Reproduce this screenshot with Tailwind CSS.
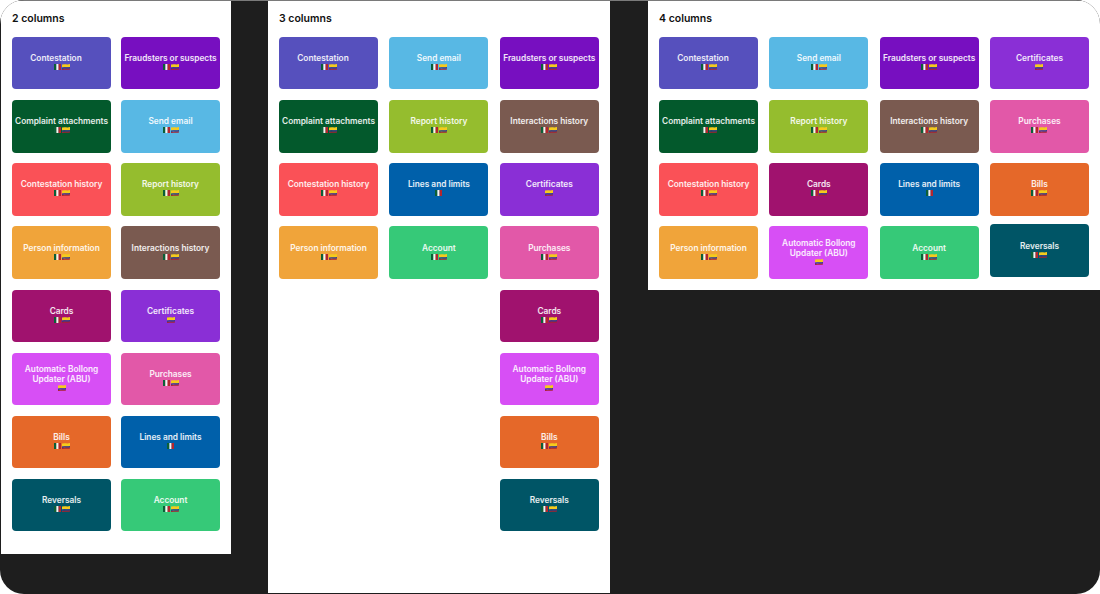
<!DOCTYPE html>
<html>

<head>
    <meta charset="UTF-8">
    <title>Columns</title>
    <script src="https://cdn.jsdelivr.net/npm/@tailwindcss/browser@4"></script>
</head>

<body class="bg-white">
    <div class="h-[594px] w-[1100px] overflow-hidden rounded-[24px] bg-[#1e1e1e] font-['Inter',sans-serif]">
        <!-- Top edge of the frame -->
        <div class="h-px bg-[#7a7a7a]"></div>

        <div class="flex items-start">

            <!-- 2 columns -->
            <div class="ml-px h-[553px] w-[230px] bg-white pl-[11px] pt-[10px]">
                <h2 class="mb-[11px] text-[10.5px] leading-[15px] font-semibold text-[#111]">2 columns</h2>
                <div id="two" class="flex gap-[10px]"></div>
            </div>

            <!-- 3 columns -->
            <div class="ml-[37px] h-[592px] w-[342px] bg-white pl-[11px] pt-[10px]">
                <h2 class="mb-[11px] text-[10.5px] leading-[15px] font-semibold text-[#111]">3 columns</h2>
                <div id="three" class="flex gap-[11.4px]"></div>
            </div>

            <!-- 4 columns -->
            <div class="ml-[38px] h-[289px] w-[452px] bg-white pl-[11px] pt-[10px]">
                <h2 class="mb-[11px] text-[10.5px] leading-[15px] font-semibold text-[#111]">4 columns</h2>
                <div id="four" class="flex gap-[11.33px]"></div>
            </div>
        </div>
    </div>

    <script>
        const cards = {
            contestation: ['Contestation', 'bg-[#5650bd]', 'both'],
            email: ['Send email', 'bg-[#58b8e4]', 'both'],
            fraud: ['Fraudsters or suspects', 'bg-[#770fc0]', 'both'],
            certificates: ['Certificates', 'bg-[#8a2fd6]', 'co'],
            complaint: ['Complaint attachments', 'bg-[#03592c]', 'both'],
            report: ['Report history', 'bg-[#95bd2e]', 'both'],
            interactions: ['Interactions history', 'bg-[#7a5a50]', 'both'],
            purchases: ['Purchases', 'bg-[#e258a8]', 'both'],
            history: ['Contestation history', 'bg-[#fa5157]', 'both'],
            cards: ['Cards', 'bg-[#a0126e]', 'both'],
            lines: ['Lines and limits', 'bg-[#0060aa]', 'mx'],
            bills: ['Bills', 'bg-[#e56829]', 'both'],
            person: ['Person information', 'bg-[#f0a43a]', 'both'],
            abu: ['Automatic Bollong<br>Updater (ABU)', 'bg-[#d74ff5]', 'co'],
            account: ['Account', 'bg-[#36c978]', 'both'],
            reversals: ['Reversals', 'bg-[#005566]', 'both']
        };

        // Small flags, the second one waves a little
        const mx = '<svg width="7" height="6" viewBox="0 0 7 6"><rect width="2.4" height="6" fill="#0b5f36"/><rect x="2.4" width="2.2" height="6" fill="#f4f4f0"/><rect x="4.6" width="2.4" height="6" fill="#b3262e"/></svg>';
        const co = '<svg width="8" height="6" viewBox="0 0 8 6"><path d="M0 .6Q2 0 4 .3T8 0V3Q6 3.5 4 3.2T0 3.5Z" fill="#f5cb1c"/><path d="M0 3.5Q2 3 4 3.2T8 3V4.5Q6 5 4 4.7T0 5Z" fill="#2b3f8f"/><path d="M0 5Q2 4.5 4 4.7T8 4.5V5.6Q6 6 4 5.8T0 6Z" fill="#a8222e"/></svg>';

        function renderColumns(id, columns) {
            const root = document.getElementById(id);
            columns.forEach(column => {
                const col = document.createElement('div');
                col.className = 'flex w-[99px] flex-col gap-[10.75px]';
                column.forEach(key => {
                    const [label, color, flags] = cards[key];
                    const shift = key === 'reversals' && id === 'four' ? ' -mt-[2px]' : '';
                    // The Contestation label sits left of the card's centre in the reference
                    const labelClass = key === 'contestation' ? 'pr-[11px]' : '';
                    const flagHtml = flags === 'both' ? mx + co : flags === 'mx' ? mx : co;
                    col.innerHTML += `<div class="flex h-[52.4px] flex-col items-center justify-center rounded-[4px] pb-[3px] ${color}${shift} text-center text-[8.3px] leading-[10px] font-semibold whitespace-nowrap text-white/90">
                        <span class="${labelClass}">${label}</span><span class="mt-px flex gap-[1px]">${flagHtml}</span></div>`;
                });
                root.appendChild(col);
            });
        }

        renderColumns('two', [
            ['contestation', 'complaint', 'history', 'person', 'cards', 'abu', 'bills', 'reversals'],
            ['fraud', 'email', 'report', 'interactions', 'certificates', 'purchases', 'lines', 'account']
        ]);
        renderColumns('three', [
            ['contestation', 'complaint', 'history', 'person'],
            ['email', 'report', 'lines', 'account'],
            ['fraud', 'interactions', 'certificates', 'purchases', 'cards', 'abu', 'bills', 'reversals']
        ]);
        renderColumns('four', [
            ['contestation', 'complaint', 'history', 'person'],
            ['email', 'report', 'cards', 'abu'],
            ['fraud', 'interactions', 'lines', 'account'],
            ['certificates', 'purchases', 'bills', 'reversals']
        ]);
    </script>
</body>

</html>
